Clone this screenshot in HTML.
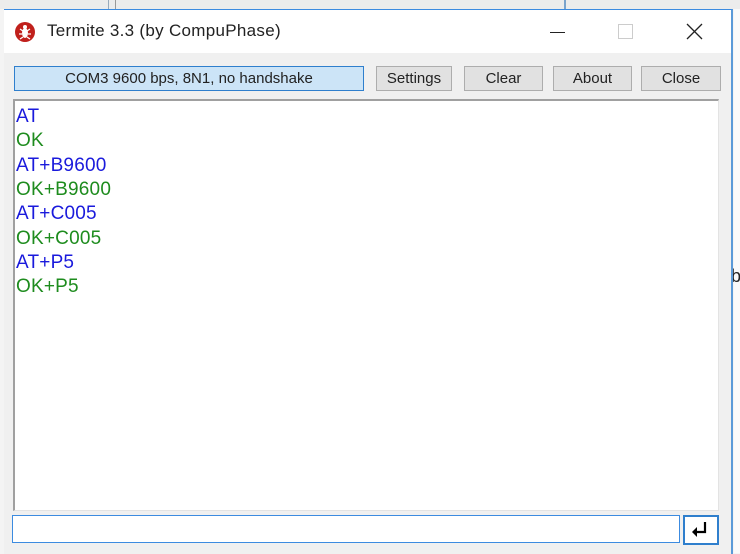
<!DOCTYPE html>
<html><head><style>
body{margin:0;width:740px;height:553px;overflow:hidden;background:#f4f4f4;font-family:"Liberation Sans",Arial,sans-serif;position:relative}
.abs{position:absolute}
.btn{position:absolute;top:66px;height:23px;background:#e1e1e1;border:1px solid #adadad;font-size:15px;line-height:23px;text-align:center;color:#222}
.t{position:absolute;left:16px;font-size:19px;line-height:20px;letter-spacing:0.2px}
.b{color:#1a1adc}.g{color:#1e8c1e}
</style></head><body>
<div class="abs" style="left:0;top:0;width:740px;height:9px;background:#ececec"></div>
<div class="abs" style="left:108px;top:0;width:1px;height:9px;background:#9ab"></div>
<div class="abs" style="left:115px;top:0;width:1px;height:9px;background:#999"></div>
<div class="abs" style="left:564px;top:0;width:2px;height:9px;background:#7aa3cc"></div>
<div class="abs" style="left:734px;top:9px;width:6px;height:544px;background:#fafafa"></div>
<div class="abs" style="left:731px;top:266px;font-size:18px;color:#222">b</div>
<div class="abs" style="left:4px;top:9px;width:727px;height:544px;background:#f0f0f0;border-top:1px solid #3c8be0;border-right:2px solid #5b9ad8"></div>
<div class="abs" style="left:4px;top:10px;width:727px;height:43px;background:#fff"></div>
<svg class="abs" style="left:14px;top:21px" width="22" height="22" viewBox="0 0 22 22"><circle cx="11" cy="11" r="10" fill="#c0201c"/><ellipse cx="11" cy="12" rx="3" ry="5" fill="#fff"/><circle cx="11" cy="6" r="2" fill="#fff"/><path d="M6 8l3 2M16 8l-3 2M5 13h3M17 13h-3M6 18l3-2M16 18l-3-2" stroke="#fff" stroke-width="1.3"/></svg>
<div class="abs" style="left:47px;top:21px;font-size:17px;letter-spacing:0.3px;color:#222">Termite 3.3 (by CompuPhase)</div>
<div class="abs" style="left:550px;top:32px;width:15px;height:1px;background:#222"></div>
<div class="abs" style="left:618px;top:24px;width:13px;height:13px;border:1px solid #ccc"></div>
<svg class="abs" style="left:686px;top:23px" width="17" height="17"><path d="M1 1L16 16M16 1L1 16" stroke="#222" stroke-width="1.3"/></svg>
<div class="abs" style="left:14px;top:66px;width:348px;height:23px;background:#cce4f7;border:1px solid #2f7fcd;font-size:15px;line-height:23px;text-align:center;color:#222">COM3 9600 bps, 8N1, no handshake</div>
<div class="btn" style="left:376px;width:74px">Settings</div>
<div class="btn" style="left:464px;width:77px">Clear</div>
<div class="btn" style="left:553px;width:77px">About</div>
<div class="btn" style="left:641px;width:78px">Close</div>
<div class="abs" style="left:13px;top:99px;width:703px;height:409px;background:#fff;border-top:2px solid #a0a0a0;border-left:2px solid #a0a0a0;border-right:1px solid #e3e3e3;border-bottom:1px solid #e3e3e3"></div>
<div class="t b" style="top:107px">AT</div>
<div class="t g" style="top:131px">OK</div>
<div class="t b" style="top:156px">AT+B9600</div>
<div class="t g" style="top:180px">OK+B9600</div>
<div class="t b" style="top:204px">AT+C005</div>
<div class="t g" style="top:229px">OK+C005</div>
<div class="t b" style="top:253px">AT+P5</div>
<div class="t g" style="top:277px">OK+P5</div>
<div class="abs" style="left:12px;top:515px;width:666px;height:26px;background:#fff;border:1px solid #3c8be0"></div>
<div class="abs" style="left:683px;top:515px;width:32px;height:26px;background:#fff;border:2px solid #2f7fcd"></div>
<svg class="abs" style="left:689px;top:520px" width="22" height="18"><path d="M16 2v10H6" stroke="#000" stroke-width="2.2" fill="none"/><path d="M3 12l5-5v10z" fill="#000"/></svg>
</body></html>
